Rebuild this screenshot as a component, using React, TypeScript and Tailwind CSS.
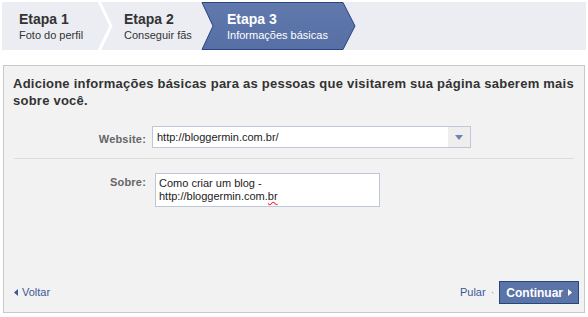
const font = { fontFamily: '"Liberation Sans", Arial, sans-serif' };

function Step({ title, sub, active }: { title: string; sub: string; active?: boolean }) {
  return (
    <div className={active ? 'leading-none text-white' : 'leading-none text-[#333]'}>
      <div className="text-[14px] font-bold">{title}</div>
      <div className="mt-[4px] text-[11px]">{sub}</div>
    </div>
  );
}

export default function App() {
  return (
    <div className="h-[317px] w-[588px] overflow-hidden bg-white" style={font}>
      {/* steps */}
      <div className="mx-[2px] mt-[2px] flex h-[48px] bg-[#ECEDF3]">
        <div className="relative flex w-[111px] items-center pl-[17px]">
          <Step title="Etapa 1" sub="Foto do perfil" />
          <svg className="absolute right-0 top-0 h-[48px] w-[16px]" viewBox="0 0 16 48">
            <polyline points="2,-1 14,24 2,49" fill="none" stroke="#fff" strokeWidth="3" />
          </svg>
        </div>
        <div className="flex w-[87px] items-center pl-[11px]">
          <Step title="Etapa 2" sub="Conseguir fãs" />
        </div>
        <div className="relative flex w-[158px] items-center pl-[27px]">
          <svg className="absolute left-0 top-0 h-[48px] w-[158px]" viewBox="0 0 158 48">
            <defs>
              <linearGradient id="g" x1="0" y1="0" x2="0" y2="1">
                <stop offset="0" stopColor="#6179AD" />
                <stop offset="1" stopColor="#566FA4" />
              </linearGradient>
            </defs>
            <polygon points="2,0.5 143,0.5 155,24 143,47.5 2,47.5 13,24" fill="url(#g)" stroke="#29447E" strokeWidth="1" />
          </svg>
          <div className="relative">
            <Step title="Etapa 3" sub="Informações básicas" active />
          </div>
        </div>
      </div>

      {/* panel */}
      <div className="mx-[3px] mt-[15px] flex h-[248px] flex-col border border-[#C8C8C8] bg-[#F2F2F2] pl-[9px] pr-[5px] pt-[9px] pb-[8px]">
        <p className="text-[13px] font-bold leading-[17px] tracking-[0.24px] text-[#333]">
          Adicione informações básicas para as pessoas que visitarem sua página saberem mais sobre você.
        </p>

        <div className="mt-[17px] flex items-start">
          <div className="w-[139px] pt-[5px] pr-[6px] text-right text-[11px] font-bold tracking-[0.2px] text-[#666]">Website:</div>
          <div className="flex h-[22px] w-[319px] border border-[#BDC7D8] bg-white">
            <div className="flex flex-1 items-center pl-[4px] text-[11px] text-[#222]">http://bloggermin.com.br/</div>
            <div className="flex w-[22px] items-center justify-center bg-[#EEEEEE]">
              <svg width="8" height="5" viewBox="0 0 8 5">
                <polygon points="0,0 8,0 4,5" fill="#6D84B4" />
              </svg>
            </div>
          </div>
        </div>

        <div className="ml-[1px] mr-[5px] mt-[10px] h-px bg-[#DDDDDD]" />

        <div className="mt-[14px] flex items-start">
          <div className="w-[139px] pt-[1px] pr-[6px] text-right text-[11px] font-bold tracking-[0.2px] text-[#666]">Sobre:</div>
          <div className="ml-[3px] h-[34px] w-[225px] border border-[#BDC7D8] bg-white px-[3px] pt-[3px] text-[11px] leading-[13px] text-[#222]">
            Como criar um blog -<br />
            http://bloggermin.com.<span className="underline decoration-red-500 decoration-wavy">br</span>
          </div>
        </div>

        <div className="mt-auto flex items-center justify-between">
          <a className="flex items-center pl-[1px] text-[11px] text-[#3B5998]">
            <svg width="4" height="7" viewBox="0 0 4 7" className="mr-[4px]">
              <polygon points="4,0 4,7 0,3.5" fill="#3B5998" />
            </svg>
            Voltar
          </a>
          <div className="flex items-center">
            <span className="text-[11px] text-[#3B5998]">Pular</span>
            <span className="mx-[5px] text-[11px] text-[#999]">·</span>
            <button className="flex h-[23px] items-center border border-[#29447E] bg-[#5B74A8] px-[6px] text-[12px] font-bold text-white">
              Continuar
              <svg width="4" height="7" viewBox="0 0 4 7" className="ml-[5px]">
                <polygon points="0,0 0,7 4,3.5" fill="#fff" />
              </svg>
            </button>
          </div>
        </div>
      </div>
    </div>
  );
}
